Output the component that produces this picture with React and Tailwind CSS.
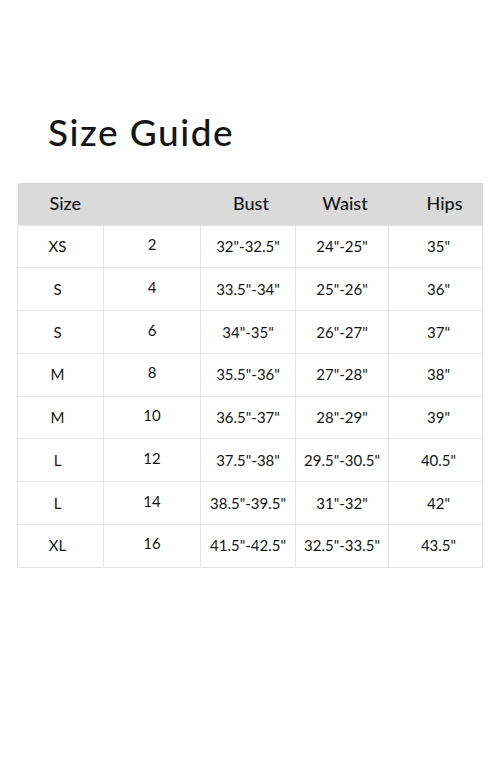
const rows = [
  ["XS", "2", "32\"-32.5\"", "24\"-25\"", "35\""],
  ["S", "4", "33.5\"-34\"", "25\"-26\"", "36\""],
  ["S", "6", "34\"-35\"", "26\"-27\"", "37\""],
  ["M", "8", "35.5\"-36\"", "27\"-28\"", "38\""],
  ["M", "10", "36.5\"-37\"", "28\"-29\"", "39\""],
  ["L", "12", "37.5\"-38\"", "29.5\"-30.5\"", "40.5\""],
  ["L", "14", "38.5\"-39.5\"", "31\"-32\"", "42\""],
  ["XL", "16", "41.5\"-42.5\"", "32.5\"-33.5\"", "43.5\""],
];

export default function App() {
  return (
    <div
      className="w-[500px] h-[769px] bg-white text-[#151515]"
      style={{ fontFamily: "Lato, 'Open Sans', sans-serif" }}
    >
      <h1 className="pt-[108px] pl-[48px] text-[37px] leading-[48px] font-medium tracking-[1.5px]">
        Size Guide
      </h1>

      <table className="mt-[27px] ml-[17px] w-[465px] border-collapse table-fixed text-[15px]">
        <colgroup>
          <col className="w-[86px]" />
          <col className="w-[97px]" />
          <col className="w-[95px]" />
          <col className="w-[93px]" />
          <col className="w-[94px]" />
        </colgroup>
        <thead>
          <tr className="bg-[#dadada] h-[42px] text-[18px]">
            <th className="text-left pl-[32px] font-medium">Size</th>
            <th></th>
            <th className="font-medium pl-[6px]">Bust</th>
            <th className="font-medium pl-[6px]">Waist</th>
            <th className="font-medium pl-[18px]">Hips</th>
          </tr>
        </thead>
        <tbody>
          {rows.map((r, i) => (
            <tr key={i} className="h-[42.75px]">
              <td className="border border-[#e4e4e4] text-center pr-[6px]">{r[0]}</td>
              <td className="border border-[#e4e4e4] text-center pb-[4px]">{r[1]}</td>
              <td className="border border-[#e4e4e4] text-center">{r[2]}</td>
              <td className="border border-[#e4e4e4] text-center">{r[3]}</td>
              <td className="border border-[#e4e4e4] text-center pl-[6px]">{r[4]}</td>
            </tr>
          ))}
        </tbody>
      </table>
    </div>
  );
}
